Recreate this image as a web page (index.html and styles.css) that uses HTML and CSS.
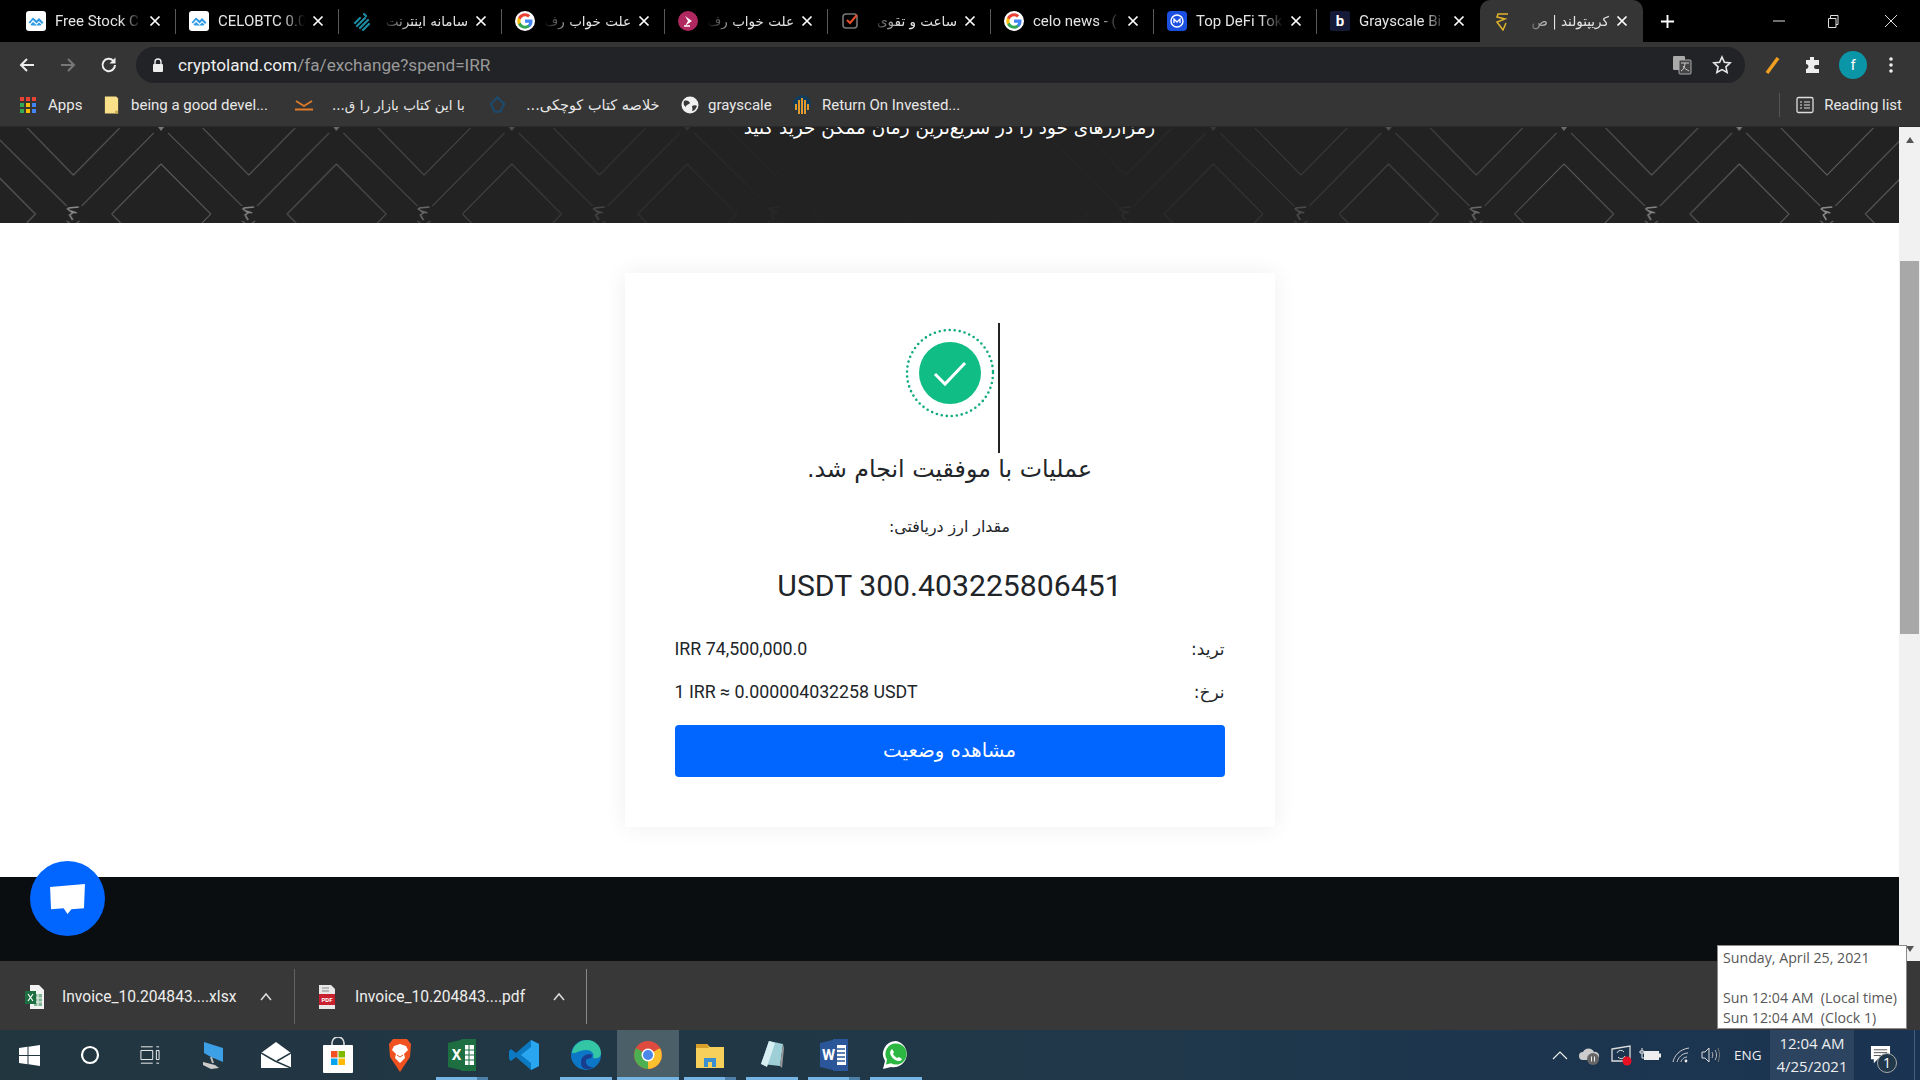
FILE: index.html
```html
<!DOCTYPE html>
<html lang="fa">
<head>
<meta charset="utf-8">
<title>کریپتولند</title>
<link rel="stylesheet" href="styles.css">
</head>
<body>
<svg class="sprite" aria-hidden="true">
  <symbol id="g" viewBox="0 0 24 24">
    <circle cx="12" cy="12" r="12" fill="#fff"/>
    <path fill="#4285F4" d="M21 12.200c0-.6-.1-1.300-.2-1.900H12v3.700h5c-.2 1.100-.9 2.100-1.900 2.800v2.300h3C20 17.400 21 15 21 12.200z"/>
    <path fill="#34A853" d="M12 21.200c2.500 0 4.600-.8 6.100-2.200l-3-2.300c-.8.6-1.900.9-3.100.9-2.400 0-4.400-1.600-5.200-3.800H3.700V16.200c1.500 3 4.700 5 8.300 5z"/>
    <path fill="#FBBC05" d="M6.800 13.800c-.4-1.200-.4-2.400 0-3.600V7.800H3.700c-1.300 2.600-1.300 5.800 0 8.400z"/>
    <path fill="#EA4335" d="M12 6.400c1.400 0 2.600.5 3.600 1.400l2.700-2.700C16.600 3.700 14.500 2.800 12 2.800c-3.600 0-6.800 2-8.300 5l3.100 2.400C7.600 8 9.600 6.400 12 6.400z"/>
  </symbol>
  <symbol id="tv" viewBox="0 0 20 20">
    <rect width="20" height="20" rx="3" fill="#fff"/>
    <path fill="#2e9be6" d="M2.500 11.500 7 6.500l3.500 3 2.500-2.500 4.500 4.500-1.500 1.500-3-3-2.500 2.500L7 9l-3 3.500z"/>
    <path fill="#2e9be6" d="M4.500 13.500 7 11l3.500 3 2.500-2.500 2.500 2-1 1H5.500z"/>
  </symbol>
  <symbol id="x" viewBox="0 0 12 12">
    <path d="M1.500 1.500l9 9M10.500 1.500l-9 9" stroke="#fff" stroke-width="1.700" fill="none"/>
  </symbol>
  <symbol id="caret" viewBox="0 0 14 10">
    <path d="M2 8l5-6 5 6" stroke="#ddd" stroke-width="1.500" fill="none"/>
  </symbol>
</svg>

<div class="screen">
  <header class="tabstrip">
    <div class="tab">
      <svg class="fav"><use href="#tv"/></svg><span class="tab-title">Free Stock C</span><svg class="tab-x"><use href="#x"/></svg>
    </div>
    <div class="tab">
      <svg class="fav"><use href="#tv"/></svg><span class="tab-title">CELOBTC 0.0</span><svg class="tab-x"><use href="#x"/></svg>
    </div>
    <div class="tab">
      <svg class="fav" viewBox="0 0 20 20"><g stroke="#1c8ba3" stroke-width="2.200" stroke-linecap="round"><path d="M3 12l5-5M5 15l8-8M8 17l8-8M11 19l6-6M12 3l2 2"/></g></svg><span class="tab-title rtl">سامانه اینترنت</span><svg class="tab-x"><use href="#x"/></svg>
    </div>
    <div class="tab">
      <svg class="fav"><use href="#g"/></svg><span class="tab-title rtl">علت خواب رف</span><svg class="tab-x"><use href="#x"/></svg>
    </div>
    <div class="tab">
      <svg class="fav" viewBox="0 0 20 20"><circle cx="10" cy="10" r="10" fill="#b0285f"/><path d="M7 5l7 5-7 5 3-5z" fill="#fff"/><path d="M6 15h6" stroke="#fff" stroke-width="1.500"/></svg><span class="tab-title rtl">علت خواب رف</span><svg class="tab-x"><use href="#x"/></svg>
    </div>
    <div class="tab">
      <svg class="fav" viewBox="0 0 20 20"><rect x="2" y="3" width="14" height="14" rx="3" fill="none" stroke="#777" stroke-width="1.600"/><path d="M6 9l3 3 7-8" fill="none" stroke="#e8502a" stroke-width="2"/></svg><span class="tab-title rtl">ساعت و تقوی</span><svg class="tab-x"><use href="#x"/></svg>
    </div>
    <div class="tab">
      <svg class="fav"><use href="#g"/></svg><span class="tab-title">celo news - (</span><svg class="tab-x"><use href="#x"/></svg>
    </div>
    <div class="tab">
      <svg class="fav" viewBox="0 0 20 20"><rect width="20" height="20" rx="4" fill="#1b4fe0"/><circle cx="10" cy="10" r="6" fill="none" stroke="#fff" stroke-width="1.400"/><path d="M7 12V8l3 3 3-3v4" fill="none" stroke="#fff" stroke-width="1.300"/></svg><span class="tab-title">Top DeFi Tok</span><svg class="tab-x"><use href="#x"/></svg>
    </div>
    <div class="tab">
      <span class="fav fav-b">b</span><span class="tab-title">Grayscale Bi</span><svg class="tab-x"><use href="#x"/></svg>
    </div>
    <div class="tab tab-active">
      <svg class="fav" viewBox="0 0 20 20"><path d="M15 3H5L4 6l8 2-8 3 6 8 3-7" fill="none" stroke="#e0b32c" stroke-width="1.500"/></svg><span class="tab-title rtl">کریپتولند | ص</span><svg class="tab-x"><use href="#x"/></svg>
    </div>
    <svg class="newtab" viewBox="0 0 16 16"><path d="M8 1v14M1 8h14" stroke="#fff" stroke-width="2"/></svg>
    <div class="winctl">
      <svg class="win-min" viewBox="0 0 14 14"><path d="M1 7h12" stroke="#ddd" stroke-width="1"/></svg>
      <svg class="win-max" viewBox="0 0 14 14"><path d="M2.500 4.500h7.500v9H2.500zM4.500 4.500v-3h7.500v9H10" stroke="#ddd" stroke-width="1" fill="none"/></svg>
      <svg viewBox="0 0 14 14"><path d="M1 1l12 12M13 1L1 13" stroke="#ddd" stroke-width="1"/></svg>
    </div>
  </header>

  <div class="toolbar">
    <svg class="nav" viewBox="0 0 18 18"><path d="M16 9H3M9 3L3 9l6 6" stroke="#eee" stroke-width="2" fill="none"/></svg>
    <svg class="nav" viewBox="0 0 18 18"><path d="M2 9h13M9 3l6 6-6 6" stroke="#777" stroke-width="2" fill="none"/></svg>
    <svg class="nav" viewBox="0 0 18 18"><path d="M15 9a6.200 6.200 0 1 1-1.800-4.400" stroke="#eee" stroke-width="2" fill="none"/><path d="M15.500 1.500v6h-6z" fill="#eee"/></svg>
    <div class="omnibox">
      <svg class="lock" viewBox="0 0 12 14"><path d="M3 6V4a3 3 0 0 1 6 0v2" stroke="#eee" stroke-width="1.400" fill="none"/><rect x="1" y="6" width="10" height="8" rx="1" fill="#eee"/></svg>
      <span class="url"><b>cryptoland.com</b>/fa/exchange?spend=IRR</span>
      <svg class="omni-icon" viewBox="0 0 20 20"><rect x="1" y="1" width="12" height="14" rx="1" fill="#aaa"/><rect x="7" y="5" width="12" height="14" rx="1" fill="#444" stroke="#aaa"/><path d="M9 8h8M13 8c0 4-2 7-4 8M11 11c1 2 4 4 6 5" stroke="#ccc" fill="none"/></svg>
      <svg class="omni-icon" viewBox="0 0 20 20"><path d="M10 2l2.400 5.300 5.800.6-4.300 3.900 1.200 5.700L10 14.600 4.900 17.500l1.200-5.700L1.800 7.900l5.800-.6z" fill="none" stroke="#e8e8e8" stroke-width="1.600"/></svg>
    </div>
    <div class="ext">
      <svg viewBox="0 0 20 20"><path d="M4 18L15 3" stroke="#f0a020" stroke-width="3.500"/></svg>
      <svg viewBox="0 0 20 20"><path d="M8 2h4v3h5v5h-3a2 2 0 0 0 0 4h3v4H4v-4a2.500 2.500 0 0 0 0-5V5h4z" fill="#eee"/></svg>
      <span class="avatar">f</span>
      <svg viewBox="0 0 20 20"><circle cx="10" cy="4" r="1.800" fill="#eee"/><circle cx="10" cy="10" r="1.800" fill="#eee"/><circle cx="10" cy="16" r="1.800" fill="#eee"/></svg>
    </div>
  </div>

  <nav class="bookmarks">
    <div class="bm bm-apps">
      <svg viewBox="0 0 18 18"><g><rect x="1" y="1" width="4" height="4" fill="#ea4335"/><rect x="7" y="1" width="4" height="4" fill="#ea4335"/><rect x="13" y="1" width="4" height="4" fill="#ea4335"/><rect x="1" y="7" width="4" height="4" fill="#34a853"/><rect x="7" y="7" width="4" height="4" fill="#fbbc05"/><rect x="13" y="7" width="4" height="4" fill="#4285f4"/><rect x="1" y="13" width="4" height="4" fill="#34a853"/><rect x="7" y="13" width="4" height="4" fill="#fbbc05"/><rect x="13" y="13" width="4" height="4" fill="#4285f4"/></g></svg>
      <span>Apps</span>
    </div>
    <div class="bm bm-dev">
      <svg viewBox="0 0 18 20"><path d="M2 1h12l2 2v16H2z" fill="#fbe08a"/><path d="M13 16h3v3h-3z" fill="#caa84e"/></svg>
      <span>being a good devel...</span>
    </div>
    <div class="bm bm-bazar">
      <svg viewBox="0 0 20 12"><path d="M1 10.500h18" stroke="#e07b2a" stroke-width="2"/><path d="M2 2l8 5 8-5" stroke="#e07b2a" stroke-width="1.800" fill="none"/></svg>
      <span class="fa">با این کتاب بازار را ق...</span>
    </div>
    <div class="bm bm-book">
      <svg viewBox="0 0 20 20"><path d="M10 2l7 7-4 8H7L3 9z" fill="none" stroke="#1d4a6b" stroke-width="2.400"/></svg>
      <span class="fa">خلاصه کتاب کوچکی...</span>
    </div>
    <div class="bm bm-gray">
      <svg viewBox="0 0 18 18"><circle cx="9" cy="9" r="8.500" fill="#f0f0f0"/><path d="M3 5c3-1 5 0 6 2-1 2-4 1-4 4-2-1-3-3-2-6zM11 10c2-1 4-1 5 0-1 3-3 5-5 5 1-2 0-3 0-5z" fill="#383838"/></svg>
      <span>grayscale</span>
    </div>
    <div class="bm bm-roi">
      <svg viewBox="0 0 18 20"><circle cx="9" cy="9" r="9" fill="#123c5c"/><g fill="#e49a2a"><rect x="2" y="9" width="2" height="6"/><rect x="5" y="5" width="2" height="14"/><rect x="8" y="3" width="2" height="16"/><rect x="11" y="5" width="2" height="14"/><rect x="14" y="9" width="2" height="6"/></g></svg>
      <span>Return On Invested...</span>
    </div>
    <div class="bm bm-reading">
      <svg viewBox="0 0 18 18"><rect x="1" y="1.500" width="16" height="15" rx="1.500" fill="none" stroke="#ddd" stroke-width="1.300"/><path d="M4 6h2M8 6h6M4 9h2M8 9h6M4 12h2M8 12h6" stroke="#ddd" stroke-width="1.200"/></svg>
      <span>Reading list</span>
    </div>
  </nav>

  <div class="viewport">
    <main class="page">
      <section class="banner">
        <svg class="banner-art" aria-hidden="true">
          <defs>
            <pattern id="zig" x="-14.300" y="0" width="175.360" height="96" patternUnits="userSpaceOnUse">
              <g fill="none" stroke="#707070" stroke-width="1">
                <path d="M-49 87L0 37 49.600 87 41 96M126 87L175.360 37 225 87M126 87l9 9"/>
                <path d="M41.700 1L87.700 48 134 1"/>
                <path d="M7 6L81 79M168 6L96 79"/>
                <path d="M81 94l3 2M94 94l-3 2"/>
              </g>
              <path d="M-3 0h6L0 4zM172.360 0h6l-3 4z" fill="#888"/>
              <path d="M93 80l-10 1-1 1 5 4-3 2 3 5M85 84l6 2" fill="none" stroke="#999" stroke-width="1.500"/>
            </pattern>
          </defs>
          <rect width="100%" height="100%" fill="url(#zig)"/>
        </svg>
        <p class="banner-text">رمزارزهای خود را در سریع‌ترین زمان ممکن خرید کنید</p>
      </section>

      <section class="content">
        <div class="card">
          <div class="hero">
            <svg class="success" viewBox="0 0 90 90">
              <circle cx="45" cy="45" r="43" fill="none" stroke="#0fa97e" stroke-width="2.600" stroke-dasharray="0 5.050" stroke-linecap="round"/>
              <circle cx="45" cy="45" r="31" fill="#10bd85"/>
              <path d="M30 46l10 10 20-21" fill="none" stroke="#fff" stroke-width="3"/>
            </svg>
          </div>
          <h1 class="title">عملیات با موفقیت انجام شد.</h1>
          <p class="amount-label">مقدار ارز دریافتی:</p>
          <p class="amount">USDT 300.403225806451</p>
          <div class="row"><span>IRR 74,500,000.0</span><span class="fa-label">ترید:</span></div>
          <div class="row row-rate"><span>1 IRR ≈ 0.000004032258 USDT</span><span class="fa-label">نرخ:</span></div>
          <button class="cta">مشاهده وضعیت</button>
        </div>
      </section>

      <footer class="site-footer"></footer>
    </main>
    <aside class="scrollbar">
      <span class="arrow-up"></span>
      <span class="thumb"></span>
      <span class="arrow-down"></span>
    </aside>
  </div>

  <div class="downloads">
    <div class="dl">
      <svg class="dl-icon" viewBox="0 0 20 26"><path d="M5 1h9l5 5v19H5z" fill="#f2f2f2"/><path d="M9 10h8v12H9z" fill="#7fb592"/><path d="M9 14h8M9 18h8M13 10v12" stroke="#f2f2f2"/><rect x="0" y="7" width="11" height="13" fill="#1d6f42"/><path d="M3 10l5 7M8 10l-5 7" stroke="#fff" stroke-width="1.200"/></svg>
      <span class="dl-name">Invoice_10.204843....xlsx</span>
      <svg class="dl-caret"><use href="#caret"/></svg>
    </div>
    <div class="dl dl-2">
      <svg class="dl-icon" viewBox="0 0 20 26"><path d="M2 1h12l4 4v20H2z" fill="#e8e8e8"/><path d="M5 4h7M5 7h7" stroke="#888"/><rect x="2" y="10" width="16" height="11" fill="#c8202f"/><text x="10" y="18" text-anchor="middle" class="pdf">PDF</text></svg>
      <span class="dl-name">Invoice_10.204843....pdf</span>
      <svg class="dl-caret"><use href="#caret"/></svg>
    </div>
  </div>

  <footer class="taskbar">
    <div class="apps">
      <div class="slot slot-first"><svg width="21" height="21" viewBox="0 0 21 21"><path fill="#fff" d="M0 3l8.500-1.200V10H0zM9.500 1.700L21 0v10H9.500zM0 11h8.500v8.200L0 18zM9.500 11H21v10L9.500 19.300z"/></svg></div>
      <div class="slot"><svg width="20" height="20" viewBox="0 0 20 20"><circle cx="10" cy="10" r="8" fill="none" stroke="#fff" stroke-width="2.200"/></svg></div>
      <div class="slot"><svg class="taskview" width="20" height="20" viewBox="0 0 22 20"><path d="M1 5h13v10H1zM1 1h13M1 19h13M18 1h3M18 5h3v10h-3zM18 19h3" fill="none" stroke="#fff" stroke-width="1"/></svg></div>
      <div class="slot"><svg width="30" height="30" viewBox="0 0 30 30"><path d="M5 2l19 6v14L12 17 5 13z" fill="#3d9fe6"/><path d="M4 22l12 3 4 3-8 1-8-4z" fill="#ccc"/><path d="M12 17l2 6" stroke="#bbb" stroke-width="2"/></svg></div>
      <div class="slot"><svg width="30" height="26" viewBox="0 0 30 26"><path d="M0 11L15 0l15 11v15H0z" fill="#fff"/><path d="M0 11l14 8 16 7" fill="none" stroke="#20363f" stroke-width="1.500"/><path d="M30 11l-14 8" stroke="#20363f" stroke-width="1.500"/></svg></div>
      <div class="slot"><svg width="30" height="36" viewBox="0 0 30 36"><path d="M9 9V6a6 6 0 0 1 12 0v3" fill="none" stroke="#ddd" stroke-width="1.600"/><rect y="8" width="30" height="28" rx="1" fill="#fff"/><rect x="8" y="14" width="6.500" height="6.500" fill="#f25022"/><rect x="15.500" y="14" width="6.500" height="6.500" fill="#7fba00"/><rect x="8" y="21.500" width="6.500" height="6.500" fill="#00a4ef"/><rect x="15.500" y="21.500" width="6.500" height="6.500" fill="#ffb900"/></svg></div>
      <div class="slot"><svg width="26" height="34" viewBox="0 0 26 34"><path d="M6 1h14l4 5-1 13-10 15L3 19 2 6z" fill="#f0521f"/><path d="M7 8l6-2 6 2 2 4-4 4 1 4-5 5-5-5 1-4-4-4z" fill="#fff"/><path d="M10 17l3 2 3-2" stroke="#f0521f" fill="none"/></svg></div>
      <div class="slot"><svg width="28" height="32" viewBox="0 0 28 32"><path d="M13 0h15v32H13z" fill="#1d6f42"/><path d="M16 6h10v20H16z" fill="#fff"/><path d="M16 11h10M16 16h10M16 21h10M21 6v20" stroke="#1d6f42"/><path d="M0 4l17-4v32L0 28z" fill="#1d6f42"/><text x="8.500" y="21" text-anchor="middle" class="tile">X</text></svg></div>
      <div class="slot"><svg width="30" height="32" viewBox="0 0 30 32"><path d="M22 1l8 4v22l-8 4L7 18l-5 4-2-2V12l2-2 5 4z" fill="#0b7ac2"/><path d="M22 1l8 4v22l-8 4zM22 8L12 16l10 8z" fill="#2aa5ef"/></svg></div>
      <div class="slot"><svg width="30" height="30" viewBox="0 0 30 30"><circle cx="15" cy="15" r="15" fill="#0c77c6"/><path d="M1 13C2 4 10 0 16 0c8 0 14 6 14 13 0 5-5 6-8 5 2-5-2-8-7-8-6 0-11 4-14 3z" fill="#34c5a5"/><path d="M10 22c0-5 4-8 9-8 3 0 2 3 1 4-3 1-5 0-5 4 0 3 3 5 7 5-3 3-8 3-11 0-1-2-1-3-1-5z" fill="#1a3e8f"/></svg></div>
      <div class="slot slot-active"><svg width="28" height="28" viewBox="0 0 28 28"><circle cx="14" cy="14" r="14" fill="#dd4b3e"/><path d="M14 14L26 7a14 14 0 0 1-12 21z" fill="#fbc02d"/><path d="M14 14L2 7A14 14 0 0 0 14 28z" fill="#4caf50"/><path d="M14 7h12" stroke="#dd4b3e" stroke-width="1"/><circle cx="14" cy="14" r="6.500" fill="#fff"/><circle cx="14" cy="14" r="5" fill="#4a87e8"/></svg></div>
      <div class="slot"><svg width="28" height="26" viewBox="0 0 28 26"><path d="M0 2h11l3 3h14v21H0z" fill="#f7cf5b"/><path d="M0 2h11l2 4H0z" fill="#d8a028"/><path d="M8 25v-9h12v9h-4v-5h-4v5z" fill="#3a8fd0"/></svg></div>
      <div class="slot"><svg width="26" height="30" viewBox="0 0 26 30"><path d="M10 1l14 3-3 22-19-2z" fill="#9ecfd6"/><path d="M10 1L2 24l6 3 8-24z" fill="#d7eef2"/><path d="M21 26l3-22 1 4-2 20z" fill="#999"/></svg></div>
      <div class="slot"><svg width="28" height="32" viewBox="0 0 28 32"><path d="M13 0h15v32H13z" fill="#2b579a"/><path d="M16 6h10v20H16z" fill="#fff"/><path d="M17 10h8M17 14h8M17 18h8M17 22h8" stroke="#2b579a" stroke-width="1.500"/><path d="M0 4l17-4v32L0 28z" fill="#2b579a"/><text x="8.500" y="21" text-anchor="middle" class="tile">W</text></svg></div>
      <div class="slot"><svg width="28" height="30" viewBox="0 0 28 30"><path d="M14 1a13 13 0 0 0-11 20L1 29l8-2A13 13 0 1 0 14 1z" fill="#fff"/><path d="M14 3.500a10.500 10.500 0 0 0-9 16l-1 5 5-1.300A10.500 10.500 0 1 0 14 3.500z" fill="#2bb741"/><path d="M10 9l2 3-1 2c1 2 3 3 4 4l2-1 3 2c-1 2-2 2-4 2-4-1-7-4-8-8 0-2 1-3 2-4z" fill="#fff"/></svg></div>
    </div>
    <div class="tray">
      <svg class="t-up" viewBox="0 0 16 10"><path d="M1 9l7-7 7 7" stroke="#eee" stroke-width="1.200" fill="none"/></svg>
      <svg class="t-cloud" viewBox="0 0 22 20"><path d="M5 15a4 4 0 0 1 0-8 6 6 0 0 1 11 0 4 4 0 0 1 2 8z" fill="#ccc"/><circle cx="15" cy="14" r="6" fill="#666"/><path d="M13.500 11.500v5M16.500 11.500v5" stroke="#eee"/></svg>
      <svg class="t-sync" viewBox="0 0 22 22"><path d="M2 5l18-3v15H2z" fill="none" stroke="#ddd" stroke-width="1.300"/><path d="M7 9a4 4 0 0 1 7-1M15 12a4 4 0 0 1-7 1" stroke="#ddd" fill="none"/><circle cx="17" cy="17" r="4.500" fill="#e81123"/></svg>
      <svg class="t-batt" viewBox="0 0 22 14"><path d="M3 0v3M1 3h4v2H1zM3 5v5h2" stroke="#eee" fill="none"/><rect x="5" y="3" width="15" height="9" fill="#eee"/><rect x="20" y="5.500" width="2" height="4" fill="#eee"/></svg>
      <svg class="t-wifi" viewBox="0 0 18 16"><path d="M1 15C2 9 8 2 17 1M5 15c1-4 5-9 11-9M9 15c0-2 3-5 6-5" stroke="#ccc" fill="none"/><circle cx="14" cy="14" r="1.400" fill="#eee"/></svg>
      <svg class="t-vol" viewBox="0 0 20 18"><path d="M1 6h3l4-4v14l-4-4H1z" fill="none" stroke="#ddd"/><path d="M11 6c1 2 1 4 0 6M14 4c2 3 2 7 0 10" stroke="#bbb" fill="none"/><path d="M17 2c2 4 2 10 0 14" stroke="#777" fill="none"/></svg>
      <span class="t-lang">ENG</span>
      <div class="t-clock"><span>12:04 AM</span><span>4/25/2021</span></div>
      <div class="t-note">
        <svg viewBox="0 0 22 22"><path d="M1 1h20v14H8l-4 4v-4H1z" fill="#fff"/><path d="M4 5h14M4 8h14M4 11h14" stroke="#555"/></svg>
        <span class="t-badge">1</span>
      </div>
      <span class="t-desk"></span>
    </div>
  </footer>

  <div class="tooltip">
    <span>Sunday, April 25, 2021</span>
    <span class="tip-gap">Sun 12:04 AM&nbsp;&nbsp;(Local time)</span>
    <span>Sun 12:04 AM&nbsp;&nbsp;(Clock 1)</span>
  </div>

  <button class="chat" aria-label="chat">
    <svg viewBox="0 0 38 32"><path d="M1 4l36-3-1 25-13 1-4 5-4-6-13 1z" fill="#fff"/></svg>
  </button>
</div>
</body>
</html>
```

FILE: styles.css
```css
* { box-sizing: border-box; }
html, body { margin: 0; height: 100%; overflow: hidden; }
body { font-family: Roboto, "DejaVu Sans", sans-serif; background: #000; color: #fff; }
.sprite { width: 0; height: 0; display: block; position: absolute; }
.screen { position: relative; width: 1920px; height: 1080px; display: flex; flex-direction: column; }

/* tab strip */
.tabstrip { height: 42px; background: #000; display: flex; align-items: stretch; padding-left: 13px; flex: none; }
.tab { width: 163px; display: flex; align-items: center; padding: 0 15px 0 13px; position: relative; flex: none; }
.tab::after { content: ""; position: absolute; right: 0; top: 9px; bottom: 8px; width: 1px; background: #5a5a5a; }
.tab:nth-child(9)::after, .tab-active::after { display: none; }
.tab-active { background: #353535; border-radius: 10px 10px 0 0; }
.fav { width: 20px; height: 20px; flex: none; }
.fav-b { background: #141a38; color: #fff; font: 700 15px/20px Roboto, sans-serif; text-align: center; border-radius: 2px; }
.tab-title { flex: 1; min-width: 0; margin-left: 9px; font-size: 15px; line-height: 42px; white-space: nowrap; overflow: hidden; color: #e4e4e4; -webkit-mask-image: linear-gradient(to left, transparent 0, #000 22px); mask-image: linear-gradient(to left, transparent 0, #000 22px); }
.tab-title.rtl { direction: rtl; font-family: "DejaVu Sans", sans-serif; font-size: 13.500px; -webkit-mask-image: linear-gradient(to right, transparent 0, #000 30px); mask-image: linear-gradient(to right, transparent 0, #000 30px); }
.tab-x { width: 12px; height: 12px; flex: none; margin-left: 7px; }
.newtab { width: 15px; height: 15px; align-self: center; margin-left: 17px; flex: none; }
.winctl { margin-left: auto; display: flex; align-items: center; gap: 44px; padding-right: 22px; }
.winctl svg { width: 14px; height: 14px; }
.winctl .win-min { margin-right: -4px; }

/* toolbar */
.toolbar { height: 42px; background: #353535; display: flex; align-items: center; padding: 4px 0 0 18px; flex: none; }
.nav { width: 18px; height: 18px; margin-right: 23px; flex: none; }
.omnibox { width: 1609px; height: 36px; margin-left: -5px; background: #222326; border-radius: 18px; display: flex; align-items: center; padding: 0 13px 0 16px; flex: none; }
.lock { width: 12px; height: 14px; flex: none; }
.url { margin-left: 14px; flex: 1; font-size: 17.200px; color: #9a9a9a; white-space: nowrap; }
.url b { font-weight: 400; color: #efefef; }
.omni-icon { width: 20px; height: 20px; flex: none; margin-left: 20px; }
.ext { display: flex; align-items: center; margin-left: 18px; }
.ext svg { width: 20px; height: 20px; flex: none; margin-right: 19px; }
.ext svg:nth-child(2) { margin-right: 17px; }
.avatar { width: 28px; height: 28px; border-radius: 50%; background: #0b96a8; color: #fff; font-size: 15px; line-height: 28px; text-align: center; margin-right: 14px; flex: none; }

/* bookmarks */
.bookmarks { height: 43px; background: #353535; border-bottom: 1px solid #2a2a2a; display: flex; align-items: center; padding-left: 19px; font-size: 15px; color: #e8e8e8; flex: none; }
.bm { display: flex; align-items: center; white-space: nowrap; flex: none; }
.bm svg { flex: none; }
.bm .fa { font-family: "DejaVu Sans", sans-serif; font-size: 13.500px; direction: rtl; }
.bm-apps { width: 84px; gap: 11px; }
.bm-apps svg { width: 18px; height: 18px; }
.bm-dev { width: 191px; gap: 11px; }
.bm-dev svg { width: 17px; height: 20px; }
.bm-bazar { width: 194px; gap: 18px; }
.bm-bazar svg { width: 20px; height: 12px; }
.bm-book { width: 193px; gap: 19px; }
.bm-book svg { width: 19px; height: 20px; }
.bm-book .fa { font-size: 14.500px; }
.bm-gray { width: 112px; gap: 9px; }
.bm-gray svg { width: 18px; height: 18px; }
.bm-roi { gap: 11px; }
.bm-roi svg { width: 18px; height: 20px; }
.bm-reading { margin-left: auto; padding: 0 18px 0 16px; gap: 10px; height: 24px; border-left: 1px solid #555; }
.bm-reading svg { width: 18px; height: 18px; }

/* viewport */
.viewport { height: 834px; display: flex; flex: none; background: #fff; }
.page { width: 1899px; display: flex; flex-direction: column; flex: none; }
.banner { height: 96px; background: #222; position: relative; overflow: hidden; flex: none; }
.banner-art { position: absolute; inset: 0; width: 100%; height: 100%; }
.banner::after { content: ""; position: absolute; inset: 0; background: linear-gradient(to right, rgba(34,34,34,.1) 0, rgba(34,34,34,.2) 15%, rgba(34,34,34,.95) 40%, #222 50%, rgba(34,34,34,.95) 58%, rgba(34,34,34,.2) 85%, rgba(34,34,34,.1) 100%); }
.banner-text { position: relative; z-index: 1; margin: -14px 0 0; text-align: center; direction: rtl; font-family: "DejaVu Sans", sans-serif; font-size: 18.400px; line-height: 30px; color: #fff; }
.content { height: 654px; padding-top: 50px; display: flex; justify-content: center; background: #fff; flex: none; }
.card { width: 650px; height: 554px; padding: 50px; background: #fff; box-shadow: 0 0 22px rgba(0,0,0,.07); color: #212529; display: flex; flex-direction: column; align-items: stretch; }
.hero { width: 100px; height: 130px; align-self: center; border-right: 2px solid #222; flex: none; display: flex; align-items: flex-start; justify-content: flex-start; }
.success { width: 90px; height: 90px; margin: 5px 0 0 5px; }
.title { margin: 0; height: 32px; font: 400 23.700px/32px "DejaVu Sans", sans-serif; text-align: center; direction: rtl; }
.amount-label { margin: 30px 0 0; height: 24px; font: 400 15.800px/24px "DejaVu Sans", sans-serif; text-align: center; direction: rtl; }
.amount { margin: 27px 0 0; height: 40px; font-size: 30.200px; line-height: 40px; text-align: center; }
.row { margin-top: 31px; height: 24px; display: flex; justify-content: space-between; font-size: 17.800px; line-height: 24px; }
.row-rate { margin-top: 19px; }
.fa-label { font-family: "DejaVu Sans", sans-serif; font-size: 17px; direction: rtl; }
.cta { margin-top: 21px; height: 52px; border: 0; border-radius: 4px; background: #0066ff; color: #fff; font: 400 19.800px/52px "DejaVu Sans", sans-serif; direction: rtl; padding: 0; flex: none; }
.site-footer { flex: 1; background: #0b0e11; }

/* scrollbar */
.scrollbar { width: 21px; background: #f1f1f1; display: flex; flex-direction: column; align-items: center; position: relative; flex: none; }
.arrow-up { margin-top: 10px; border: 4.500px solid transparent; border-top: 0; border-bottom: 6px solid #555; }
.thumb { width: 19px; height: 373px; margin-top: 118px; background: #a8a8a8; }
.arrow-down { margin-top: auto; margin-bottom: 9px; border: 4.500px solid transparent; border-bottom: 0; border-top: 6px solid #555; }

/* downloads */
.downloads { height: 69px; background: #383838; display: flex; align-items: center; flex: none; }
.dl { width: 295px; height: 55px; margin-top: 2px; display: flex; align-items: center; padding-left: 25px; border-right: 1px solid #626262; font-size: 15.600px; color: #eee; flex: none; }
.dl-2 { width: 292px; padding-left: 22px; border-right-color: #888; }
.dl-icon { width: 20px; height: 26px; flex: none; }
.dl-name { width: 172px; margin-left: 17px; white-space: nowrap; }
.dl-2 .dl-name { margin-left: 18px; }
.dl-caret { width: 14px; height: 10px; margin-left: 25px; flex: none; }
.pdf { font: 700 6px Roboto, sans-serif; fill: #fff; }
.tile { font: 700 15px Roboto, sans-serif; fill: #fff; }

/* taskbar */
.taskbar { height: 50px; background: linear-gradient(to right, #223640 0, #20384a 60%, #1a3352 100%); display: flex; position: relative; flex: none; }
.apps { display: flex; height: 100%; flex: none; }
.slot { width: 62px; height: 50px; display: flex; align-items: center; justify-content: center; position: relative; flex: none; }
.slot-first { width: 59px; }
.slot-active { background: #4b5f69; }
.taskview { margin-right: 4px; }
.slot:nth-child(8)::after, .slot:nth-child(10)::after, .slot:nth-child(11)::after, .slot:nth-child(12)::after, .slot:nth-child(13)::after, .slot:nth-child(14)::after, .slot:nth-child(15)::after { content: ""; position: absolute; left: 5px; right: 5px; bottom: 0; height: 3px; background: #76b4e4; }
.slot:nth-child(8)::after, .slot:nth-child(12)::after, .slot:nth-child(14)::after { background: linear-gradient(to right, #76b4e4 78%, #4d7fa8 78%); }
.slot:nth-child(11)::after { left: 0; right: 0; }
.tray { margin-left: auto; display: flex; align-items: center; height: 100%; }
.tray svg { flex: none; }
.t-up { width: 16px; height: 10px; margin-right: 10px; }
.t-cloud { width: 22px; height: 20px; margin-right: 10px; }
.t-sync { width: 22px; height: 22px; margin-right: 7px; }
.t-batt { width: 22px; height: 14px; margin-right: 11px; }
.t-wifi { width: 18px; height: 16px; margin-right: 11px; }
.t-vol { width: 20px; height: 18px; margin-right: 13px; }
.t-lang { width: 36px; font: 400 13.500px "Open Sans", sans-serif; color: #eee; }
.t-clock { width: 84px; height: 50px; background: #2c4460; display: flex; flex-direction: column; align-items: center; justify-content: center; font: 400 15px/23px "Open Sans", sans-serif; color: #eee; }
.t-note { width: 60px; height: 50px; position: relative; }
.t-note svg { position: absolute; left: 16px; top: 15px; width: 21px; height: 21px; }
.t-badge { position: absolute; left: 23px; top: 23px; width: 20px; height: 20px; border-radius: 50%; background: #20384a; border: 1px solid #aaa; font: 400 14px/18px "Open Sans", sans-serif; text-align: center; color: #fff; }
.t-desk { width: 1px; height: 50px; background: #45607e; margin-right: 5px; }

/* overlays */
.tooltip { position: absolute; left: 1717px; top: 945px; width: 190px; height: 84px; padding: 2px 0 0 5px; background: #fff; border: 1px solid #8a8a8a; color: #575757; font: 400 14.200px/20px "Open Sans", sans-serif; display: flex; flex-direction: column; white-space: nowrap; }
.tip-gap { margin-top: 20px; }
.chat { position: absolute; left: 30px; top: 861px; width: 75px; height: 75px; border-radius: 50%; border: 0; padding: 0; background: #0066ff; display: flex; align-items: center; justify-content: center; }
.chat svg { width: 37px; height: 31px; }
```
